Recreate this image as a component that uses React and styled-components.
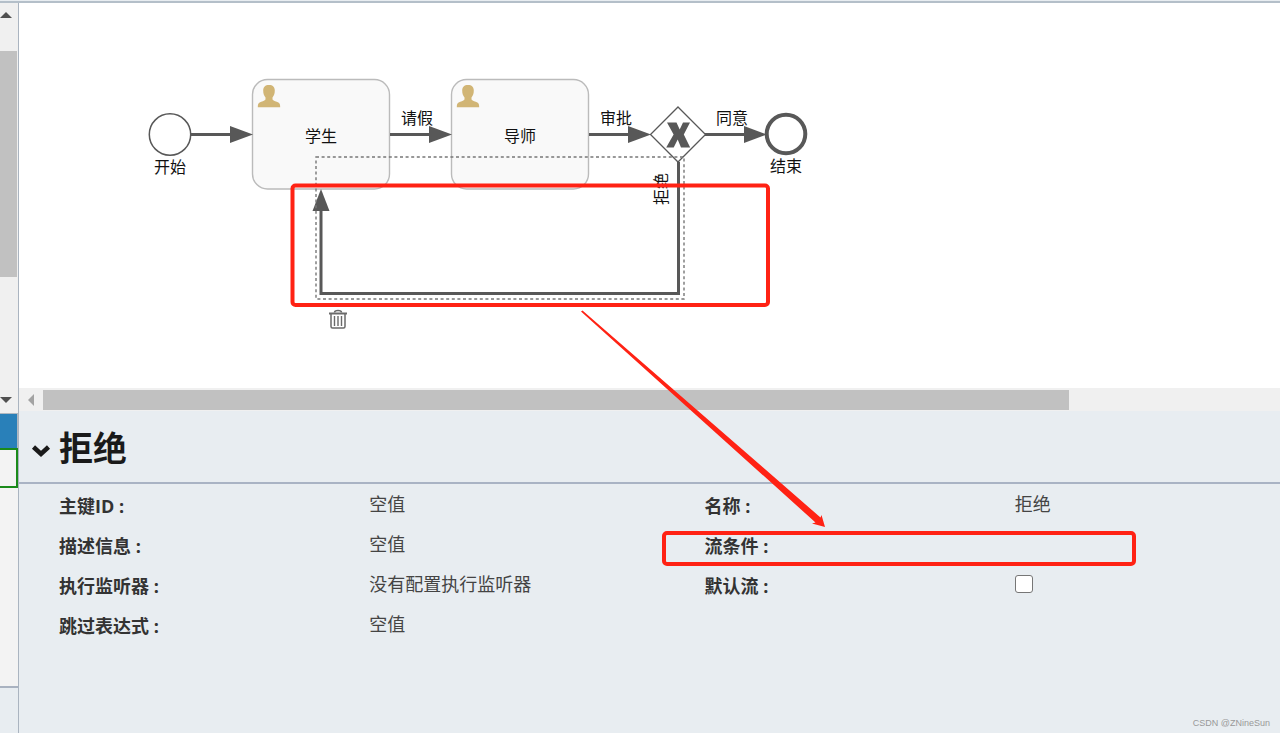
import { useState } from "react";
import styled, { createGlobalStyle } from "styled-components";

const Global = createGlobalStyle`
  * {
    box-sizing: border-box;
  }

  body {
    margin: 0;
    background: #e8edf1;
    font-family: "Open Sans", "Noto Sans CJK SC", sans-serif;
    color: #333333;
  }
`;

const Page = styled.div`
  position: relative;
  min-height: 100vh;
  display: flex;
  flex-direction: column;
  overflow: hidden;
`;

const TopLine = styled.div`
  height: 3px;
  background: #e8edf1;
  border-bottom: 2px solid #b4bfc9;
`;

const Body = styled.div`
  flex: 1;
  display: flex;
`;

/* ---------- left strip ---------- */

const Side = styled.aside`
  width: 19px;
  flex-shrink: 0;
  display: flex;
  flex-direction: column;
  border-right: 1px solid #aab4c0;
`;

const VScroll = styled.div`
  height: 410px;
  padding: 9px 1px 10px 0;
  display: flex;
  flex-direction: column;
  background: #f0f0f0;
`;

const VArrow = styled.svg`
  display: block;
  width: 12px;
  height: 6px;
  fill: #505050;
`;

const VThumb = styled.div`
  height: 226px;
  margin-top: 33px;
  margin-bottom: auto;
  background: #c1c1c1;
`;

const SideList = styled.div`
  height: 275px;
  background: #f3f3f3;
  border-bottom: 2px solid #a9b2c0;
`;

const SideItem = styled.div`
  height: ${(p) => (p.$active ? "35px" : "40px")};
  background: ${(p) => (p.$active ? "#2980b9" : "#f3f3f3")};
  border: solid ${(p) => (p.$active ? "#b0b8c0" : "#1a8a1a")};
  border-width: ${(p) => (p.$active ? "1px 1px 0 0" : "2px 2px 2px 0")};
`;

/* ---------- canvas ---------- */

const Main = styled.main`
  flex: 1;
  min-width: 0;
  display: flex;
  flex-direction: column;
`;

const Canvas = styled.section`
  position: relative;
  height: 385px;
  background: #ffffff;
  overflow: hidden;
`;

const Diagram = styled.svg`
  display: block;
  font-size: 16px;
  text-anchor: middle;

  text {
    fill: #111111;
  }

  .task {
    fill: #f9f9f9;
    stroke: #bbbbbb;
    stroke-width: 1.4;
  }

  .flow {
    fill: none;
    stroke: #585858;
    stroke-width: 3;
  }

  .dark {
    fill: #585858;
  }

  .shape {
    fill: #ffffff;
    stroke: #585858;
  }

  .select {
    fill: none;
    stroke: #777777;
    stroke-width: 1.4;
    stroke-dasharray: 3 2.6;
  }
`;

const TrashButton = styled.button`
  position: absolute;
  left: 310px;
  top: 306px;
  width: 18px;
  height: 20px;
  padding: 0;
  border: none;
  background: none;
  cursor: pointer;

  svg {
    display: block;
  }
`;

const HScroll = styled.div`
  height: 23px;
  padding: 2px 0 1px;
  display: flex;
  align-items: center;
  background: #f0f0f0;
`;

const HArrow = styled.svg`
  width: 6px;
  height: 12px;
  margin: 0 9px;
  flex-shrink: 0;
  fill: #a3a3a3;
`;

const HThumb = styled.div`
  flex: 1;
  height: 20px;
  margin-right: 211px;
  background: #c1c1c1;
`;

/* ---------- properties ---------- */

const Panel = styled.section`
  flex: 1;
  display: flex;
  flex-direction: column;
`;

const PanelHead = styled.header`
  height: 73px;
  padding: 2px 12px 0;
  display: flex;
  align-items: center;
  gap: 8px;
  border-bottom: 2px solid #a9b3c4;
`;

const Toggle = styled.button`
  width: 20px;
  height: 14px;
  padding: 0;
  margin-top: 6px;
  border: none;
  background: none;
  cursor: pointer;

  svg {
    display: block;
  }
`;

const Title = styled.h1`
  margin: 0;
  font-size: 34px;
  line-height: 40px;
  font-weight: 700;
  color: #1a1a1a;
`;

const Props = styled.dl`
  margin: 0;
  padding: 2px 0 0 40px;
  display: grid;
  grid-template-columns: 62fr 67fr 62fr 53fr;
  grid-auto-rows: 40px;
  font-size: 18px;
  line-height: 40px;
`;

const Name = styled.dt`
  font-weight: 700;
`;

const Value = styled.dd`
  margin: 0;
  line-height: 36px;
  color: #444444;
`;

const Check = styled.input`
  display: block;
  width: 18px;
  height: 18px;
  margin: 9px 0;
  appearance: none;
  background: #ffffff;
  border: 1px solid #767676;
  border-radius: 3px;

  &:checked {
    background: #2980b9;
  }
`;

const Mark = styled.footer`
  margin-top: auto;
  padding: 0 10px 4px;
  text-align: right;
  font-size: 9px;
  line-height: 12px;
  font-family: "Liberation Sans", sans-serif;
  color: #999999;
`;

/* red marks drawn over everything */
const Notes = styled.svg`
  position: absolute;
  left: 0;
  top: 0;
  pointer-events: none;

  rect {
    fill: none;
    stroke: #ff2214;
    stroke-width: 4;
  }

  polygon {
    fill: #ff2214;
  }
`;

function Task({ x, label }) {
  return (
    <g transform={`translate(${x} 76.5)`}>
      <rect className="task" width="137" height="109.5" rx="15" />
      <path
        fill="#d1b575"
        d="M16.500 5.500c3.800 0 5.800 2 5.800 5.600 0 3-.8 5.400-2.300 6.900v2c1.200 1.500 3.800 2 5.900 3.100 1.300.7 1.800 2 1.800 4.600h-22.400c0-2.600.5-3.900 1.800-4.600 2.100-1.100 4.700-1.600 5.900-3.100v-2c-1.500-1.500-2.300-3.900-2.300-6.900 0-3.600 2-5.600 5.800-5.600z"
      />
      <text x="68.500" y="62">
        {label}
      </text>
    </g>
  );
}

function Flow({ from, to, label }) {
  return (
    <g>
      <path className="flow" d={`M${from} 131.500H${to - 20}`} />
      <path className="dark" d={`M${to} 131.500l-23-8.500v17z`} />
      {label && (
        <text x={(from + to) / 2 - 4} y="121">
          {label}
        </text>
      )}
    </g>
  );
}

function Process() {
  return (
    <Diagram width="820" height="340" role="img" aria-label="请假流程">
      <circle className="shape" cx="151" cy="131.500" r="20.700" strokeWidth="1.500" />
      <text x="151" y="170">开始</text>

      <Task x={233.5} label="学生" />
      <Task x={432.5} label="导师" />

      <path className="shape" d="M659 104l27.500 27.500L659 159l-27.500-27.500z" strokeWidth="1.300" />
      <path
        className="dark"
        d="M648 119.500h9.500l3.200 7 3.300-7h7l-6.200 12 6.400 13h-9.200l-3.300-8-4 8h-7.500l7.400-13z"
      />

      <circle className="shape" cx="767" cy="131" r="19.300" strokeWidth="4" />
      <text x="767" y="169">结束</text>

      <Flow from={172} to={234} />
      <Flow from={371} to={433} label="请假" />
      <Flow from={570} to={632} label="审批" />
      <Flow from={686} to={748} label="同意" />

      <path className="flow" d="M659.500 159V290.500H302V206" />
      <path className="dark" d="M302 186l8.500 22h-17z" />
      <text transform="translate(648 186) rotate(-90)">拒绝</text>

      <rect className="select" x="297" y="154" width="368" height="142" />
    </Diagram>
  );
}

function App() {
  const [open, setOpen] = useState(true);
  const [isDefault, setIsDefault] = useState(false);

  return (
    <Page>
      <Global />
      <TopLine />
      <Body>
        <Side>
          <VScroll>
            <VArrow viewBox="0 0 12 6">
              <path d="M6 0l6 6H0z" />
            </VArrow>
            <VThumb />
            <VArrow viewBox="0 0 12 6">
              <path d="M0 0h12L6 6z" />
            </VArrow>
          </VScroll>
          <SideList>
            <SideItem $active />
            <SideItem />
          </SideList>
        </Side>

        <Main>
          <Canvas>
            <Process />
            <TrashButton aria-label="删除">
              <svg width="18" height="20" viewBox="0 0 18 20" fill="none" stroke="#6a6a6a">
                <path d="M5.500 3.500C5.500 1.800 6.500 1.500 9 1.500s3.500.3 3.500 2" strokeWidth="1.500" />
                <path d="M0 4.500h18" strokeWidth="2" />
                <path d="M2 5v12.500q0 1.500 1.500 1.500h11q1.500 0 1.500-1.500V5" strokeWidth="1.500" />
                <path d="M5.500 7v10M9 7v10M12.500 7v10" strokeWidth="1.400" />
              </svg>
            </TrashButton>
          </Canvas>
          <HScroll>
            <HArrow viewBox="0 0 6 12">
              <path d="M6 0v12L0 6z" />
            </HArrow>
            <HThumb />
          </HScroll>

          <Panel>
            <PanelHead>
              <Toggle aria-label="展开" onClick={() => setOpen(!open)}>
                <svg width="20" height="14" viewBox="0 0 20 14">
                  <path d="M2.500 3l7.500 7 7.500-7" fill="none" stroke="#1a1a1a" strokeWidth="4.500" />
                </svg>
              </Toggle>
              <Title>拒绝</Title>
            </PanelHead>

            {open && (
              <Props>
                <Name>主键ID :</Name>
                <Value>空值</Value>
                <Name>名称 :</Name>
                <Value>拒绝</Value>

                <Name>描述信息 :</Name>
                <Value>空值</Value>
                <Name>流条件 :</Name>
                <Value />

                <Name>执行监听器 :</Name>
                <Value>没有配置执行监听器</Value>
                <Name>
                  <label htmlFor="default-flow">默认流 :</label>
                </Name>
                <Value>
                  <Check
                    id="default-flow"
                    type="checkbox"
                    checked={isDefault}
                    onChange={(e) => setIsDefault(e.target.checked)}
                  />
                </Value>

                <Name>跳过表达式 :</Name>
                <Value>空值</Value>
              </Props>
            )}
            <Mark>CSDN @ZNineSun</Mark>
          </Panel>
        </Main>
      </Body>

      <Notes width="1140" height="570">
        <rect x="292.500" y="185.500" width="475.500" height="119.500" rx="3" />
        <rect x="664" y="533" width="470" height="31" rx="3" />
        <polygon points="581,311.500 582.500,310.500 820.500,517.500 821.500,515 825,527 812,523.500 815.500,522.500" />
      </Notes>
    </Page>
  );
}

export default App;
